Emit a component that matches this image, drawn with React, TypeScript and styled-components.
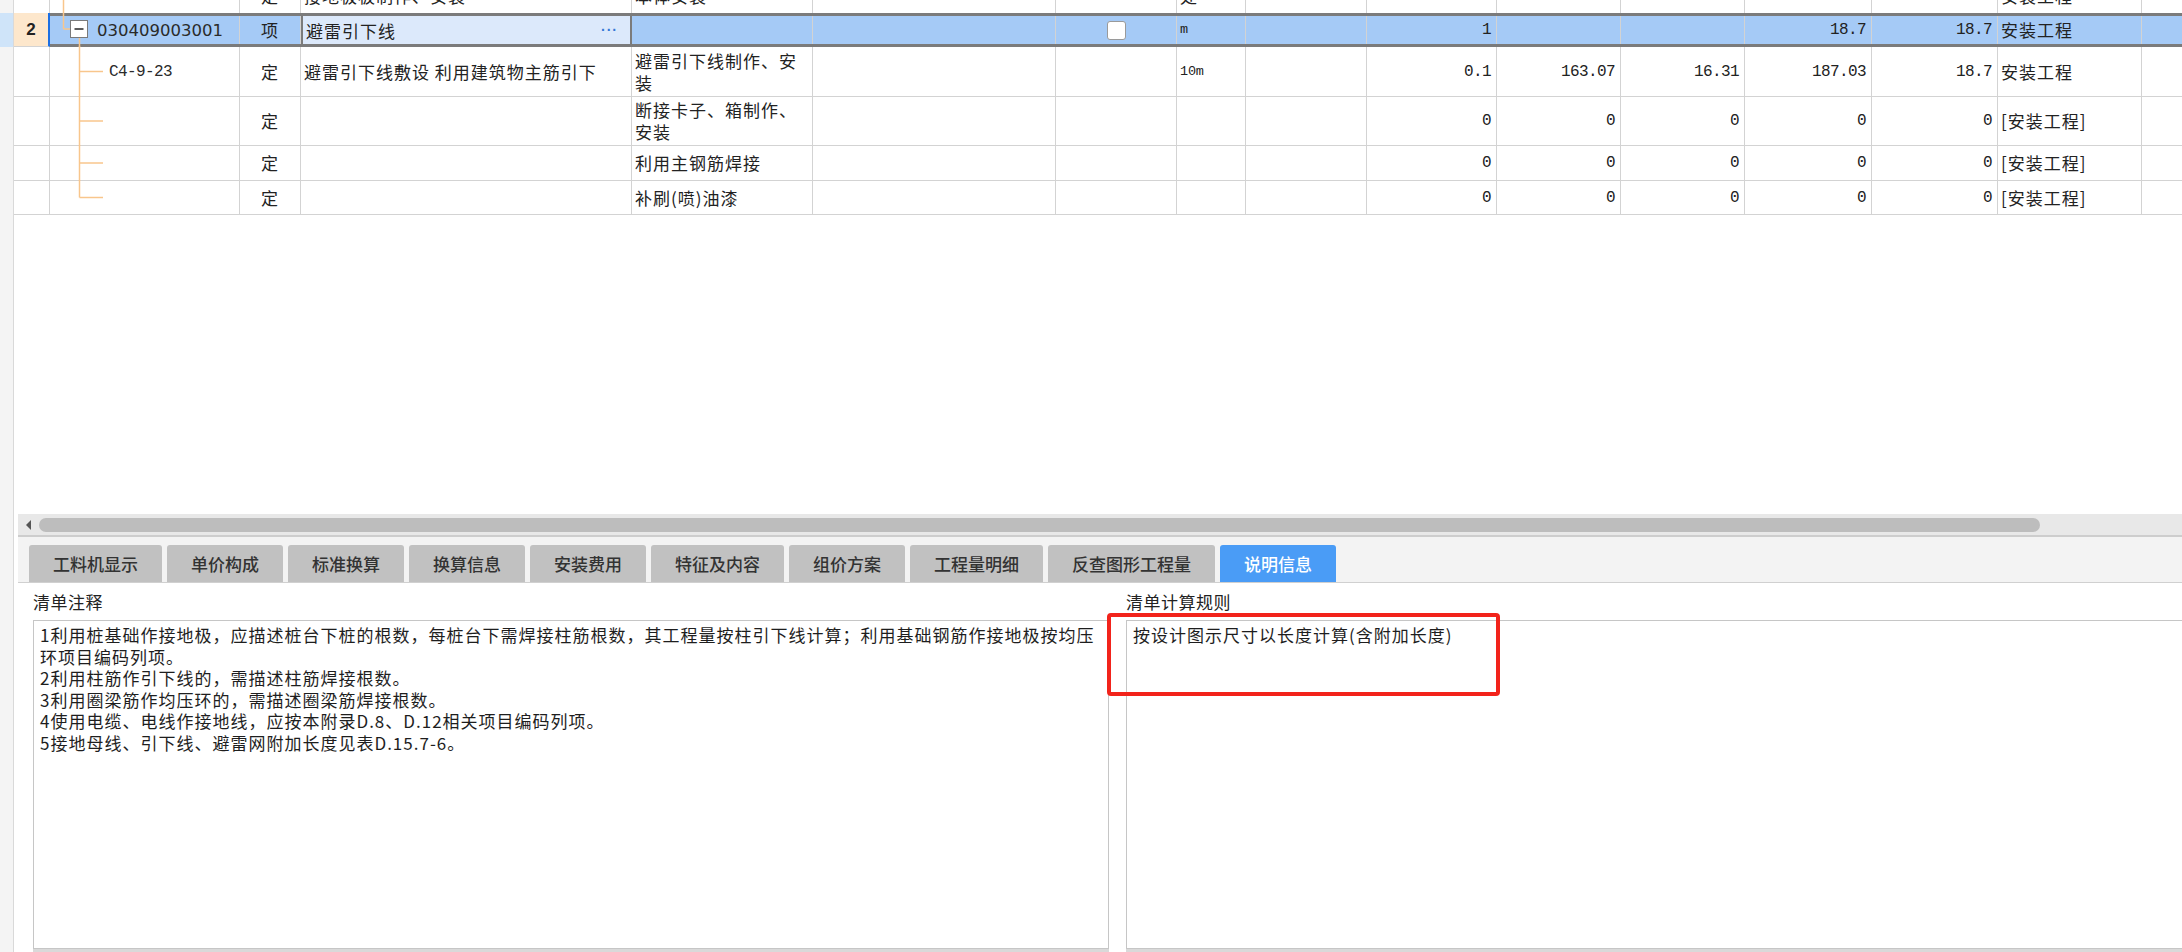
import React from "react";
import styled, { createGlobalStyle, css } from "styled-components";

const LINE = "#d3d3d3";
const CJK = `"Noto Sans CJK SC", "Noto Sans", sans-serif`;
const MONO = `"Liberation Mono", "DejaVu Sans Mono", monospace`;
const TREE = "#f8c68c";

const GlobalStyle = createGlobalStyle`
  html, body { margin: 0; padding: 0; background: #ffffff; }
  body { font-family: ${CJK}; color: #222; overflow: hidden; }
  *, *::before, *::after { box-sizing: border-box; }
`;

const Page = styled.div`
  position: relative;
  display: flex;
  width: 2182px;
  height: 952px;
  overflow: hidden;
  background: #fff;
`;

const LeftStrip = styled.div`
  width: 14px;
  flex-shrink: 0;
  background: #f4f4f4;
  border-right: 1px solid #d9d9d9;
  display: flex;
  flex-direction: column;
`;

const StripMark = styled.div`
  margin-top: 13px;
  height: 34px;
  background: #cfe4f9;
`;

const Main = styled.div`
  flex: 1;
  min-width: 0;
  display: flex;
  flex-direction: column;
`;

/* ---------- grid ---------- */

const GridArea = styled.div`
  height: 514px;
  flex-shrink: 0;
  overflow: hidden;
  background: #fff;
`;

const GridBody = styled.div`
  margin-top: -21px;
`;

const Row = styled.div<{ $h: number; $plain?: boolean }>`
  display: grid;
  grid-template-columns: 36px 1fr;
  height: ${(p) => p.$h}px;
  border-bottom: ${(p) => (p.$plain ? "none" : `1px solid ${LINE}`)};
`;

const RowNum = styled.div<{ $active?: boolean }>`
  display: flex;
  align-items: center;
  justify-content: center;
  font-family: "Liberation Sans", Arial, sans-serif;
  font-weight: bold;
  font-size: 17px;
  color: #222;
  background: ${(p) => (p.$active ? "#fde7cc" : "#fff")};
  border-right: ${(p) => (p.$active ? "2px solid #1c6fe3" : `1px solid ${LINE}`)};
  ${(p) => p.$active && css`border-bottom: 1px solid ${LINE};`}
`;

const Band = styled.div<{ $selected?: boolean }>`
  display: grid;
  grid-template-columns: 190px 61px 331px 181px 243px 121px 69px 121px 130px 124px 124px 127px 126px 144px 1fr;
  min-width: 0;
  background: ${(p) => (p.$selected ? "#a5caf6" : "#fff")};
  ${(p) =>
    p.$selected &&
    css`
      border-top: 3px solid #7b7b7b;
      border-bottom: 3px solid #7b7b7b;
    `}
`;

type Align = "left" | "center" | "right";

const Cell = styled.div<{ $align?: Align; $mono?: boolean; $small?: boolean }>`
  display: flex;
  align-items: center;
  justify-content: ${(p) =>
    p.$align === "center" ? "center" : p.$align === "right" ? "flex-end" : "flex-start"};
  min-width: 0;
  overflow: hidden;
  white-space: nowrap;
  padding: 0 ${(p) => (p.$align === "right" ? "5px" : "3px")} 0 3px;
  border-right: 1px solid ${LINE};
  color: #222;
  font-family: ${(p) => (p.$mono ? MONO : CJK)};
  font-size: ${(p) => (p.$mono ? (p.$small ? "13.5px" : "16px") : "17px")};
  letter-spacing: ${(p) => (p.$mono ? (p.$small ? "-0.2px" : "-0.6px") : "1px")};
  line-height: 22px;
`;

const LastCell = styled.div`
  min-width: 0;
`;

const TreeCell = styled.div`
  display: flex;
  align-items: stretch;
  min-width: 0;
  overflow: visible;
  border-right: 1px solid ${LINE};
  white-space: nowrap;
`;

const TreeLabel = styled.span<{ $code?: boolean; $dim?: boolean }>`
  display: flex;
  align-items: center;
  font-family: ${(p) => (p.$code ? `"DejaVu Sans", sans-serif` : MONO)};
  font-size: ${(p) => (p.$code ? "16.5px" : "16px")};
  letter-spacing: ${(p) => (p.$code ? "0" : "-0.6px")};
  color: ${(p) => (p.$dim ? "#888" : "#2a2a2a")};
`;

const TreeSvg = styled.svg`
  flex-shrink: 0;
  overflow: visible;
  display: block;
`;

const NameEdit = styled.div`
  display: flex;
  align-items: center;
  justify-content: space-between;
  min-width: 0;
  padding: 0 12px 0 3px;
  background: #dce9fb;
  border-left: 2px solid #7b7b7b;
  border-right: 2px solid #7b7b7b;
  font-size: 17px;
  letter-spacing: 1px;
  color: #222;
  white-space: nowrap;
`;

const Dots = styled.span`
  color: #3577d6;
  font-family: "Liberation Sans", sans-serif;
  font-weight: bold;
  font-size: 14px;
  letter-spacing: 1px;
`;

const CheckBox = styled.span`
  width: 19px;
  height: 19px;
  border: 1px solid #9a9a9a;
  border-radius: 3px;
  background: #fff;
`;

const Lines = styled.div`
  display: flex;
  flex-direction: column;
`;

type TreeKind = "partial" | "parent" | "child" | "last";

function Tree({ kind, h }: { kind: TreeKind; h: number }) {
  if (kind === "partial") {
    return (
      <TreeSvg width={59} height={h}>
        <line x1={13.5} y1={0} x2={13.5} y2={h + 1} stroke={TREE} strokeWidth={1.5} />
      </TreeSvg>
    );
  }
  if (kind === "parent") {
    const mid = h / 2 - 1;
    return (
      <TreeSvg width={47} height={h}>
        <line x1={13.5} y1={-3} x2={13.5} y2={mid} stroke={TREE} strokeWidth={1.5} />
        <line x1={13.5} y1={mid} x2={20} y2={mid} stroke={TREE} strokeWidth={1.5} />
        <line x1={29.5} y1={mid + 9} x2={29.5} y2={h + 3} stroke={TREE} strokeWidth={1.5} />
        <rect x={20.5} y={mid - 8.5} width={17} height={17} fill="#fff" stroke="#7a7a7a" strokeWidth={1} />
        <line x1={24.5} y1={mid} x2={33.5} y2={mid} stroke="#333" strokeWidth={1.6} />
      </TreeSvg>
    );
  }
  const mid = h / 2;
  return (
    <TreeSvg width={59} height={h}>
      <line
        x1={29.5}
        y1={-1}
        x2={29.5}
        y2={kind === "last" ? mid : h + 1}
        stroke={TREE}
        strokeWidth={1.5}
      />
      <line x1={29.5} y1={mid} x2={53} y2={mid} stroke={TREE} strokeWidth={1.5} />
    </TreeSvg>
  );
}

type Line = {
  h: number;
  tree: TreeKind;
  code: string;
  type: string;
  name: string;
  feature: string[];
  unit: string;
  qty: string;
  k: string;
  l: string;
  m: string;
  n: string;
  o: string;
};

const childRows: Line[] = [
  {
    h: 50,
    tree: "child",
    code: "C4-9-23",
    type: "定",
    name: "避雷引下线敷设 利用建筑物主筋引下",
    feature: ["避雷引下线制作、安", "装"],
    unit: "10m",
    qty: "0.1",
    k: "163.07",
    l: "16.31",
    m: "187.03",
    n: "18.7",
    o: "安装工程",
  },
  {
    h: 49,
    tree: "child",
    code: "",
    type: "定",
    name: "",
    feature: ["断接卡子、箱制作、", "安装"],
    unit: "",
    qty: "0",
    k: "0",
    l: "0",
    m: "0",
    n: "0",
    o: "[安装工程]",
  },
  {
    h: 35,
    tree: "child",
    code: "",
    type: "定",
    name: "",
    feature: ["利用主钢筋焊接"],
    unit: "",
    qty: "0",
    k: "0",
    l: "0",
    m: "0",
    n: "0",
    o: "[安装工程]",
  },
  {
    h: 34,
    tree: "last",
    code: "",
    type: "定",
    name: "",
    feature: ["补刷(喷)油漆"],
    unit: "",
    qty: "0",
    k: "0",
    l: "0",
    m: "0",
    n: "0",
    o: "[安装工程]",
  },
];

function DataRow({ r }: { r: Line }) {
  return (
    <Row $h={r.h}>
      <RowNum />
      <Band>
        <TreeCell>
          <Tree kind={r.tree} h={r.h - 1} />
          <TreeLabel>{r.code}</TreeLabel>
        </TreeCell>
        <Cell $align="center">{r.type}</Cell>
        <Cell>{r.name}</Cell>
        <Cell>
          <Lines>
            {r.feature.map((f) => (
              <span key={f}>{f}</span>
            ))}
          </Lines>
        </Cell>
        <Cell />
        <Cell />
        <Cell $mono $small>
          {r.unit}
        </Cell>
        <Cell />
        <Cell $mono $align="right">
          {r.qty}
        </Cell>
        <Cell $mono $align="right">
          {r.k}
        </Cell>
        <Cell $mono $align="right">
          {r.l}
        </Cell>
        <Cell $mono $align="right">
          {r.m}
        </Cell>
        <Cell $mono $align="right">
          {r.n}
        </Cell>
        <Cell>{r.o}</Cell>
        <LastCell />
      </Band>
    </Row>
  );
}

/* ---------- bottom ---------- */

const HScroll = styled.div`
  height: 23px;
  flex-shrink: 0;
  margin-left: 4px;
  background: #e8e8e8;
  border-bottom: 2px solid #cdcdcd;
  display: flex;
  align-items: center;
  padding-left: 8px;
`;

const ScrollArrow = styled.div`
  width: 0;
  height: 0;
  border-top: 5px solid transparent;
  border-bottom: 5px solid transparent;
  border-right: 5px solid #555;
`;

const ScrollThumb = styled.div`
  margin-left: 8px;
  width: 2001px;
  height: 14px;
  border-radius: 7px;
  background: #bdbdbd;
  flex-shrink: 0;
`;

const TabBar = styled.div`
  height: 46px;
  flex-shrink: 0;
  margin-left: 4px;
  background: #f3f3f3;
  border-bottom: 1px solid #d0d0d0;
  display: flex;
  align-items: flex-end;
  gap: 5px;
  padding-left: 11px;
`;

const Tab = styled.div<{ $active?: boolean }>`
  height: 37px;
  padding: 0 24px;
  border-radius: 3px 3px 0 0;
  background: ${(p) => (p.$active ? "#4a9cf6" : "#c1c1c1")};
  color: ${(p) => (p.$active ? "#ffffff" : "#333")};
  font-family: ${CJK};
  font-size: 17px;
  font-weight: 500;
  line-height: 37px;
  white-space: nowrap;
`;

const Detail = styled.div`
  flex: 1;
  min-height: 0;
  margin-left: 4px;
  padding-left: 15px;
  display: flex;
  gap: 17px;
  background: #fff;
  overflow: hidden;
`;

const Pane = styled.div`
  width: 1076px;
  flex-shrink: 0;
  display: flex;
  flex-direction: column;
`;

const PaneLabel = styled.div`
  height: 37px;
  display: flex;
  align-items: center;
  font-size: 17px;
  letter-spacing: 0.5px;
  color: #222;
`;

const TextBox = styled.div`
  flex: 1;
  border: 1px solid #c6c6c6;
  background: #fff;
  padding: 3px 6px;
  font-size: 17px;
  letter-spacing: 1px;
  line-height: 21.6px;
  color: #1e1e1e;
`;

const TextLine = styled.div`
  white-space: nowrap;
`;

const PaneFooter = styled.div`
  height: 3px;
  background: #d9d9d9;
`;

const Highlight = styled.div`
  position: absolute;
  left: 1107px;
  top: 613px;
  width: 393px;
  height: 83px;
  border: 4px solid #f2231b;
  border-radius: 4px;
  pointer-events: none;
`;

const tabs = [
  "工料机显示",
  "单价构成",
  "标准换算",
  "换算信息",
  "安装费用",
  "特征及内容",
  "组价方案",
  "工程量明细",
  "反查图形工程量",
  "说明信息",
];

const notes = [
  "1利用桩基础作接地极，应描述桩台下桩的根数，每桩台下需焊接柱筋根数，其工程量按柱引下线计算；利用基础钢筋作接地极按均压",
  "环项目编码列项。",
  "2利用柱筋作引下线的，需描述柱筋焊接根数。",
  "3利用圈梁筋作均压环的，需描述圈梁筋焊接根数。",
  "4使用电缆、电线作接地线，应按本附录D.8、D.12相关项目编码列项。",
  "5接地母线、引下线、避雷网附加长度见表D.15.7-6。",
];

export default function App() {
  return (
    <>
      <GlobalStyle />
      <Page>
        <LeftStrip>
          <StripMark />
        </LeftStrip>
        <Main>
          <GridArea>
            <GridBody>
              {/* partially scrolled-out row above */}
              <Row $h={34} $plain>
                <RowNum />
                <Band>
                  <TreeCell>
                    <Tree kind="partial" h={34} />
                    <TreeLabel $dim>C4-9-22</TreeLabel>
                  </TreeCell>
                  <Cell $align="center">定</Cell>
                  <Cell>接地极板制作、安装</Cell>
                  <Cell>本体安装</Cell>
                  <Cell />
                  <Cell />
                  <Cell>处</Cell>
                  <Cell />
                  <Cell $mono $align="right">1</Cell>
                  <Cell $mono $align="right">53.37</Cell>
                  <Cell $mono $align="right">10.67</Cell>
                  <Cell $mono $align="right">133.46</Cell>
                  <Cell $mono $align="right">133.46</Cell>
                  <Cell>安装工程</Cell>
                  <LastCell />
                </Band>
              </Row>

              {/* selected bill item */}
              <Row $h={34} $plain>
                <RowNum $active>2</RowNum>
                <Band $selected>
                  <TreeCell>
                    <Tree kind="parent" h={28} />
                    <TreeLabel $code>030409003001</TreeLabel>
                  </TreeCell>
                  <Cell $align="center">项</Cell>
                  <NameEdit>
                    <span>避雷引下线</span>
                    <Dots>···</Dots>
                  </NameEdit>
                  <Cell />
                  <Cell />
                  <Cell $align="center">
                    <CheckBox />
                  </Cell>
                  <Cell $mono $small>m</Cell>
                  <Cell />
                  <Cell $mono $align="right">1</Cell>
                  <Cell />
                  <Cell />
                  <Cell $mono $align="right">18.7</Cell>
                  <Cell $mono $align="right">18.7</Cell>
                  <Cell>安装工程</Cell>
                  <LastCell />
                </Band>
              </Row>

              {childRows.map((r, i) => (
                <DataRow key={i} r={r} />
              ))}
            </GridBody>
          </GridArea>

          <HScroll>
            <ScrollArrow />
            <ScrollThumb />
          </HScroll>

          <TabBar>
            {tabs.map((t, i) => (
              <Tab key={t} $active={i === tabs.length - 1}>
                {t}
              </Tab>
            ))}
          </TabBar>

          <Detail>
            <Pane>
              <PaneLabel>清单注释</PaneLabel>
              <TextBox>
                {notes.map((n) => (
                  <TextLine key={n}>{n}</TextLine>
                ))}
              </TextBox>
              <PaneFooter />
            </Pane>
            <Pane>
              <PaneLabel>清单计算规则</PaneLabel>
              <TextBox>
                <TextLine>按设计图示尺寸以长度计算(含附加长度)</TextLine>
              </TextBox>
              <PaneFooter />
            </Pane>
          </Detail>
        </Main>
        <Highlight />
      </Page>
    </>
  );
}
